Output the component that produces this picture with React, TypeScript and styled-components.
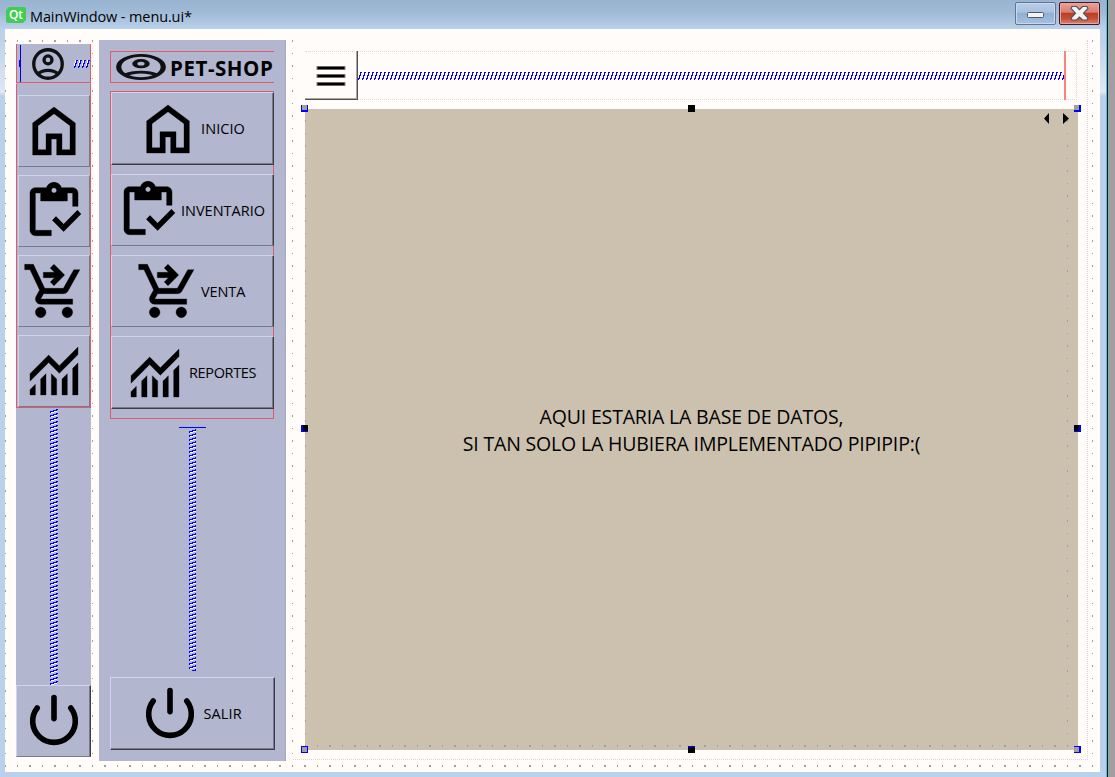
import React from "react";
import styled, { createGlobalStyle, css } from "styled-components";

const C = {
  canvas: "#fffcf9",
  panel: "#b2b6ce",
  tan: "#ccc1ae",
  red: "#dc5c6c",
  blue: "#0000ff",
  dot: "#a09f9d",
  light: "#ced3ee",
  mid: "#777a8a",
  dark: "#3b3c44",
};

const Global = createGlobalStyle`
  *{box-sizing:border-box}
  body{margin:0;overflow:hidden;font-family:"Open Sans","Noto Sans",sans-serif;color:#000}
  svg{display:block;flex:none}
`;

const dotLayer = (w: number, h: number) =>
  `conic-gradient(from 270deg at ${w}px ${h}px, ${C.dot} 90deg, transparent 0)`;

const grid = (x: number, y: number) => css`
  background-image: ${dotLayer(2, 2)}, ${dotLayer(1, 2)}, ${dotLayer(2, 1)}, ${dotLayer(1, 1)};
  background-size: 25px 25px;
  background-position: ${x}px ${y}px, ${x + 13}px ${y}px, ${x}px ${y + 13}px, ${x + 13}px ${y + 13}px;
`;

const Desktop = styled.div`
  width: 1115px;
  height: 777px;
  display: flex;
  background: #a0a0a0;
`;
const Window = styled.div`
  width: 1108px;
  height: 777px;
  display: flex;
  flex-direction: column;
  border-right: 1px solid #101010;
  box-shadow: inset -1px 0 0 #35c8ee;
  background: linear-gradient(#99b4d1 0, #a0bad6 12px, #b9d1ea 29px, #c0d4ea 45px, #dfe9f5 92px, #b9d1ea 96px);
`;
const TitleBar = styled.div`
  height: 29px;
  flex: none;
  display: flex;
  padding: 0 7px 0 6px;
`;
const QtBadge = styled.div`
  width: 20px;
  height: 16px;
  margin-top: 7px;
  border-radius: 2px;
  background: #41cd52;
  clip-path: polygon(3px 0, 100% 0, 100% 13px, 17px 100%, 0 100%, 0 3px);
  color: #fff;
  font-size: 12px;
  font-weight: 600;
  line-height: 15px;
  text-align: center;
`;
const Title = styled.div`
  flex: 1;
  margin: 6px 0 0 4px;
  font-size: 14.5px;
  line-height: 21px;
  letter-spacing: -0.12px;
  white-space: nowrap;
`;
const Caption = styled.div<{ $close?: boolean }>`
  width: 41px;
  height: 23px;
  margin: 2px 0 0 3px;
  border: 1px solid ${(p) => (p.$close ? "#4b1420" : "#5f7696")};
  border-radius: 2px;
  box-shadow: inset 0 0 0 1px ${(p) => (p.$close ? "#e9a79f" : "#c8daee")};
  background: ${(p) =>
    p.$close
      ? "linear-gradient(#e9a39a 0, #d87b6c 45%, #b93a24 46%, #c4503a 75%, #d88873 100%)"
      : "linear-gradient(#b9cde5 0, #a9c2de 45%, #8fafd1 46%, #a5c2e0 100%)"};
  display: flex;
  justify-content: center;
  align-items: center;
`;
const MinimizeSlot = styled.div`
  padding-top: 3px;
`;
const Body = styled.div`
  width: 1095px;
  height: 743px;
  margin-left: 5px;
  padding-left: 11px;
  display: flex;
  align-items: flex-start;
  background-color: ${C.canvas};
  ${grid(-1, 11)}
`;
const Rail = styled.div`
  width: 75px;
  height: 713px;
  margin-top: 15px;
  background: ${C.panel};
  display: flex;
  flex-direction: column;
`;
const Profile = styled.div`
  width: 75px;
  height: 39px;
  flex: none;
  display: flex;
  border: 1px solid ${C.red};
  border-top: 0;
  padding: 1px 0 0 2px;
`;
const Mark = styled.div`
  width: 2px;
  height: 37px;
  border-right: 1px solid ${C.blue};
  background: linear-gradient(${C.blue}, ${C.blue}) 0 15px / 1px 7px no-repeat;
`;
const ProfileIcon = styled.div`
  margin: 3px 0 0 11px;
`;
const ProfileSpring = styled.div`
  margin: 15px 0 0 10px;
`;
const RailGroup = styled.div`
  width: 75px;
  height: 324px;
  margin-top: 1px;
  flex: none;
  border: 1px solid ${C.red};
  border-top: 0;
  padding: 11px 0 0 1px;
  display: flex;
  flex-direction: column;
  gap: 8px;
`;
const Bevel = styled.div<{ $w: number; $h?: number; $pad?: number; $strong?: boolean; $deep?: boolean }>`
  width: ${(p) => p.$w}px;
  height: ${(p) => p.$h ?? 72}px;
  flex: none;
  display: flex;
  align-items: center;
  padding-left: ${(p) => p.$pad ?? 3}px;
  border-style: solid;
  border-width: 1px;
  border-color: ${C.light} ${(p) => (p.$strong ? C.dark : C.mid)} ${(p) => (p.$deep ? C.dark : C.mid)} ${C.light};
  box-shadow: inset ${(p) => (p.$strong ? -1 : 0)}px ${(p) => (p.$deep ? -1 : 0)}px 0 ${C.mid};
`;
const Label = styled.span<{ $gap: number; $ls: number; $drop?: number }>`
  margin-left: ${(p) => p.$gap}px;
  padding-top: ${(p) => p.$drop ?? 1}px;
  font-size: 14.5px;
  line-height: 20px;
  letter-spacing: ${(p) => p.$ls}px;
  white-space: nowrap;
`;
const RailSpring = styled.div`
  flex: 1;
  padding: 1px 0 0 34px;
`;
const Menu = styled.div`
  width: 187px;
  height: 721px;
  margin: 11px 0 0 8px;
  padding: 11px 0 0 11px;
  background: ${C.panel};
  border-right: 1px dotted #9a9eb5;
`;
const Brand = styled.div`
  width: 164px;
  height: 32px;
  padding-left: 5px;
  border: 1px solid ${C.red};
  border-right: 0;
  display: flex;
  align-items: center;
`;
const BrandName = styled.span`
  font-size: 20.5px;
  font-weight: 700;
  line-height: 30px;
  letter-spacing: 0.55px;
  margin: 2px 0 0 4px;
  white-space: nowrap;
`;
const MenuGroup = styled.div`
  width: 164px;
  height: 328px;
  margin-top: 8px;
  border: 1px solid ${C.red};
  display: flex;
  flex-direction: column;
  gap: 9px;
`;
const MenuSpring = styled.div`
  width: 27px;
  height: 250px;
  margin: 8px 0 0 69px;
  border-top: 1px solid ${C.blue};
  padding: 1px 0 0 10px;
`;
const Content = styled.div`
  width: 795px;
  height: 720px;
  margin: 11px 0 0 7px;
  padding: 11px 0 0 12px;
  background: ${C.canvas};
  border-right: 1px dotted #d8d6d3;
  border-bottom: 1px dotted #d8d6d3;
`;
const Header = styled.div`
  width: 772px;
  height: 49px;
  display: flex;
  border: 1px dotted #dcdad7;
  border-left: 0;
`;
const MenuToggle = styled.div`
  width: 53px;
  height: 49px;
  margin-top: -1px;
  border-right: 1px solid #545250;
  border-bottom: 1px solid #545250;
  box-shadow: inset -1px -1px 0 #a8a6a4;
  display: flex;
  padding: 13px 0 0 11px;
`;
const HeaderSpring = styled.div`
  margin: 20px 0 0;
`;
const Limit = styled.div`
  width: 2px;
  height: 49px;
  margin-top: -1px;
  background: #ff8080;
`;
const Stage = styled.div`
  position: relative;
  width: 773px;
  height: 641px;
  margin-top: 9px;
  padding-left: 1px;
  background-color: ${C.tan};
  ${grid(-1, 11)}
`;
const StagePage = styled.div`
  width: 761px;
  height: 634px;
  background: ${C.tan};
  display: flex;
  flex-direction: column;
  align-items: center;
  padding: 294px 0 0 10px;
  font-size: 19.5px;
  line-height: 27px;
  letter-spacing: -0.17px;
  white-space: nowrap;
`;
const Handle = styled.div<{ $x: number; $y: number; $fill?: string; $bw: string }>`
  position: absolute;
  left: ${(p) => p.$x}px;
  top: ${(p) => p.$y}px;
  width: 7px;
  height: 7px;
  background: ${(p) => p.$fill ?? "#a0a0a0"};
  border: solid ${C.blue};
  border-width: ${(p) => p.$bw};
`;
const Pager = styled.div`
  position: absolute;
  left: 739px;
  top: 4px;
`;

const HSpring = ({ w, id, white }: { w: number; id: string; white?: boolean }) => (
  <svg width={w} height="8" shapeRendering="crispEdges">
    <pattern id={id} width="4" height="8" patternUnits="userSpaceOnUse">
      {white && <path fill="#fff" d="M1 0h1v3H1zM0 3h1v3H0z" />}
      <path fill={C.blue} d="M2 0h2v1H2zM2 1h1v3H2zM1 3h1v4H1zM0 6h1v2H0z" />
    </pattern>
    <rect width={w} height="8" fill={`url(#${id})`} />
  </svg>
);

const VSpring = ({ w, h, id }: { w: number; h: number; id: string }) => (
  <svg width={w} height={h} shapeRendering="crispEdges">
    <pattern id={id} width="8" height="4" patternUnits="userSpaceOnUse">
      <path fill="#fff" d="M1 3h3v1H1zM4 2h3v1H4z" />
      <path fill={C.blue} d="M0 2h1v2H0zM1 2h3v1H1zM3 1h4v1H3zM6 0h2v1H6z" />
    </pattern>
    <rect width={w} height={h} fill={`url(#${id})`} />
  </svg>
);

const paths = {
  home: "M240-200h120v-240h240v240h120v-360L480-740 240-560v360Zm-80 80v-480l320-240 320 240v480H520v-240h-80v240H160Z",
  cart: "M480-560l-56-56 63-64H320v-80h167l-64-64 57-56 160 160-160 160ZM280-80q-33 0-56.5-23.5T200-160q0-33 23.5-56.5T280-240q33 0 56.5 23.5T360-160q0 33-23.5 56.5T280-80Zm400 0q-33 0-56.5-23.5T600-160q0-33 23.5-56.5T680-240q33 0 56.5 23.5T760-160q0 33-23.5 56.5T680-80ZM40-800v-80h131l170 360h280l156-280h91L692-482q-11 20-29.5 31T622-440H324l-44 80h480v80H280q-45 0-68.5-39t-1.5-79l54-98-144-304H40Z",
  chart: "M120-120v-80l80-80v160h-80Zm160 0v-240l80-80v320h-80Zm160 0v-320l80 81v239h-80Zm160 0v-239l80-80v319h-80Zm160 0v-400l80-80v480h-80ZM120-327v-113l280-280 160 160 280-280v113L560-447 400-607 120-327Z",
};

const Glyph = ({ name }: { name: keyof typeof paths }) => (
  <svg width="64" height="64" viewBox="0 -960 960 960">
    <path d={paths[name]} stroke="#000" strokeWidth="5" />
  </svg>
);

const Inventory = () => (
  <svg width="64" height="64" viewBox="0 0 24 24">
    <path d="M5 5h2v3h10V5h2v5h2V5c0-1.1-.9-2-2-2h-4.18C14.4 1.84 13.3 1 12 1s-2.4.84-2.82 2H5c-1.1 0-2 .9-2 2v14c0 1.1.9 2 2 2h6v-2H5V5zm7-2c.55 0 1 .45 1 1s-.45 1-1 1-1-.45-1-1 .45-1 1-1z" transform="translate(0 .25)" fillRule="evenodd" stroke="#000" strokeWidth=".15" />
    <path d="M20.8 11.6 15.6 16.9l-2.85-2.9-1.45 1.45 4.3 4.35 6.6-6.7z" />
  </svg>
);

const Power = () => (
  <svg width="64" height="64" viewBox="0 0 24 24" fill="none" stroke="#000" strokeWidth="2.1" strokeLinecap="round">
    <path d="M12 3.2v7.9M5.7 7.1A8 8 0 1 0 18.3 7.1" />
  </svg>
);

const Account = ({ w, h }: { w: number; h: number }) => (
  <svg width={w} height={h} viewBox="1.9 1.9 20.2 20.2" preserveAspectRatio="none">
    <g fill="none" stroke="#111114" strokeWidth="2.1">
      <circle cx="12" cy="12" r="9" />
      <circle cx="12" cy="9.4" r="2.5" />
      <path d="M5.6 18.2C7.4 16.7 9.6 16 12 16s4.6.7 6.4 2.2" />
    </g>
  </svg>
);

export default function App() {
  return (
    <Desktop>
      <Global />
      <Window>
        <TitleBar>
          <QtBadge>Qt</QtBadge>
          <Title>MainWindow - menu.ui*</Title>
          <Caption>
            <MinimizeSlot>
              <svg width="17" height="6">
                <rect x=".5" y=".5" width="16" height="5" rx="1" fill="#f4f4f4" stroke="#535666" />
              </svg>
            </MinimizeSlot>
          </Caption>
          <Caption $close>
            <svg width="19" height="17" viewBox="0 0 19 17">
              <path
                d="M2 1.5H6.5L9.5 4.6 12.500 1.5H17L18 3.500 13.500 8.300l4.500 4.700-1 2h-4.500L9.500 12 6.500 15H2l-1-2L5.500 8.300 1 3.500z"
                fill="#f3f3f3"
                stroke="#53525e"
                strokeWidth="1.2"
              />
            </svg>
          </Caption>
        </TitleBar>
        <Body>
          <Rail>
            <Profile>
              <Mark />
              <ProfileIcon>
                <Account w={32} h={32} />
              </ProfileIcon>
              <ProfileSpring>
                <HSpring w={16} id="s1" white />
              </ProfileSpring>
            </Profile>
            <RailGroup>
              <Bevel $w={72}><Glyph name="home" /></Bevel>
              <Bevel $w={72}><Inventory /></Bevel>
              <Bevel $w={72}><Glyph name="cart" /></Bevel>
              <Bevel $w={72}><Glyph name="chart" /></Bevel>
            </RailGroup>
            <RailSpring>
              <VSpring w={8} h={276} id="s2" />
            </RailSpring>
            <Bevel $w={75} $pad={5} $strong><Power /></Bevel>
          </Rail>
          <Menu>
            <Brand>
              <Account w={50} h={26} />
              <BrandName>PET-SHOP</BrandName>
            </Brand>
            <MenuGroup>
              <Bevel $w={163} $h={73} $pad={24} $strong $deep>
                <Glyph name="home" /><Label $gap={1} $ls={0.08}>INICIO</Label>
              </Bevel>
              <Bevel $w={163} $pad={4} $strong>
                <Inventory /><Label $gap={1} $ls={0}>INVENTARIO</Label>
              </Bevel>
              <Bevel $w={163} $pad={24} $strong>
                <Glyph name="cart" /><Label $gap={1} $ls={-0.1}>VENTA</Label>
              </Bevel>
              <Bevel $w={163} $h={73} $pad={11} $strong $deep>
                <Glyph name="chart" /><Label $gap={2} $ls={-0.35} $drop={0}>REPORTES</Label>
              </Bevel>
            </MenuGroup>
            <MenuSpring>
              <VSpring w={7} h={242} id="s3" />
            </MenuSpring>
            <Bevel $w={165} $h={73} $pad={27} $strong $deep>
              <Power /><Label $gap={1.5} $ls={0.1}>SALIR</Label>
            </Bevel>
          </Menu>
          <Content>
            <Header>
              <MenuToggle>
                <svg width="30" height="24">
                  <path d="M.5 4h29M.5 12h29M.5 20h29" stroke="#8c8a88" strokeWidth="4" />
                  <path d="M1.5 4h27M1.5 12h27M1.5 20h27" stroke="#000" strokeWidth="2.4" />
                </svg>
              </MenuToggle>
              <HeaderSpring>
                <HSpring w={706} id="s4" />
              </HeaderSpring>
              <Limit />
            </Header>
            <Stage>
              <StagePage>
                <div>AQUI ESTARIA LA BASE DE DATOS,</div>
                <div>SI TAN SOLO LA HUBIERA IMPLEMENTADO PIPIPIP:(</div>
              </StagePage>
              <Pager>
                <svg width="26" height="11">
                  <path d="M5 0v11L0 5.5zM19 0v11l6-5.5z" />
                </svg>
              </Pager>
              <Handle $x={-4} $y={-4} $bw="0 1px 2px 1px" />
              <Handle $x={383} $y={-4} $fill="#000" $bw="0" />
              <Handle $x={769} $y={-4} $bw="0 2px 2px 0" />
              <Handle $x={-4} $y={316} $fill="#000" $bw="0 0 1px 2px" />
              <Handle $x={769} $y={316} $fill="#000" $bw="0 2px 1px 0" />
              <Handle $x={-4} $y={637} $bw="1px" />
              <Handle $x={383} $y={637} $fill="#000" $bw="1px 0 0 0" />
              <Handle $x={769} $y={637} $bw="1px 2px 1px 0" />
            </Stage>
          </Content>
        </Body>
      </Window>
    </Desktop>
  );
}
